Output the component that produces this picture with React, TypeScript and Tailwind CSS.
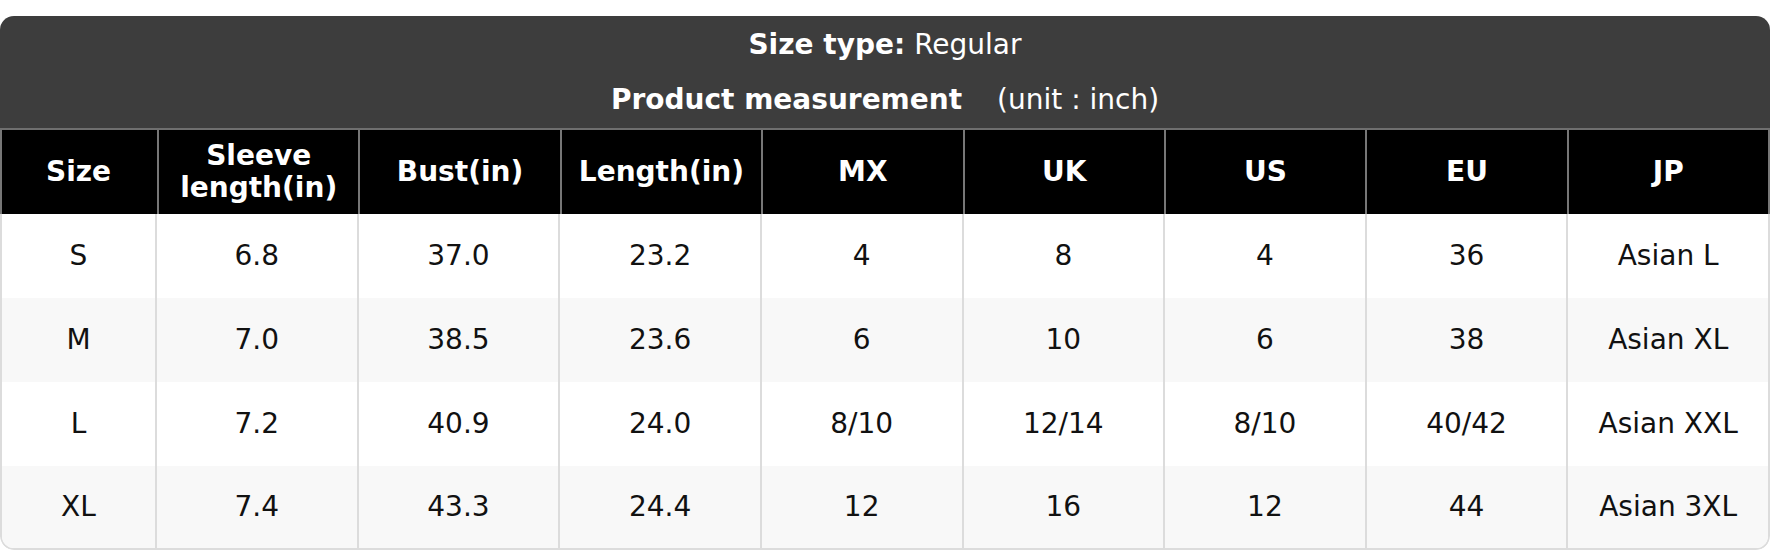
const columns = [
  "Size",
  "Sleeve length(in)",
  "Bust(in)",
  "Length(in)",
  "MX",
  "UK",
  "US",
  "EU",
  "JP",
];

const rows: string[][] = [
  ["S", "6.8", "37.0", "23.2", "4", "8", "4", "36", "Asian L"],
  ["M", "7.0", "38.5", "23.6", "6", "10", "6", "38", "Asian XL"],
  ["L", "7.2", "40.9", "24.0", "8/10", "12/14", "8/10", "40/42", "Asian XXL"],
  ["XL", "7.4", "43.3", "24.4", "12", "16", "12", "44", "Asian 3XL"],
];

export default function App() {
  return (
    <div
      className="w-[1770px] bg-white pt-[16px]"
      style={{ fontFamily: '"DejaVu Sans", Verdana, sans-serif' }}
    >
      <div className="rounded-[14px] overflow-hidden">
        {/* title block */}
        <div className="bg-[#3d3d3d] text-white text-[28px] border-b-2 border-[#6f6f6f]">
          <div className="h-[56px] flex items-center justify-center pt-[2px]">
            <span className="font-bold">Size type:</span>
            <span className="ml-[9px] font-normal">Regular</span>
          </div>
          <div className="h-[56px] flex items-center justify-center">
            <span className="font-bold">Product measurement</span>
            <span className="ml-[35px] font-normal">(unit : inch)</span>
          </div>
        </div>

        {/* header row */}
        <div className="grid grid-cols-[155px_repeat(8,minmax(0,1fr))] bg-black text-white text-[28px] font-bold border-x-2 border-[#777]">
          {columns.map((c, i) => (
            <div
              key={c}
              className={`h-[84px] flex items-center justify-center text-center leading-[32px] px-2 ${
                i > 0 ? "border-l-2 border-[#777]" : ""
              } ${i === 0 ? "w-[153px]" : ""}`}
            >
              {c === "Sleeve length(in)" ? (
                <span>
                  Sleeve
                  <br />
                  length(in)
                </span>
              ) : (
                c
              )}
            </div>
          ))}
        </div>

        {/* body */}
        <div className="border-x-2 border-b-2 border-[#dcdcdc] rounded-b-[14px] overflow-hidden">
          {rows.map((r, ri) => (
            <div
              key={ri}
              className={`grid grid-cols-[153px_repeat(8,minmax(0,1fr))] text-[28px] text-[#111] ${
                ri % 2 === 1 ? "bg-[#f8f8f8]" : "bg-white"
              }`}
            >
              {r.map((v, ci) => (
                <div
                  key={ci}
                  className={`${ri === rows.length - 1 ? "h-[82px]" : "h-[84px]"} flex items-center justify-center ${
                    ci > 0 ? "border-l-2 border-[#dcdcdc]" : ""
                  }`}
                >
                  {v}
                </div>
              ))}
            </div>
          ))}
        </div>
      </div>
    </div>
  );
}
